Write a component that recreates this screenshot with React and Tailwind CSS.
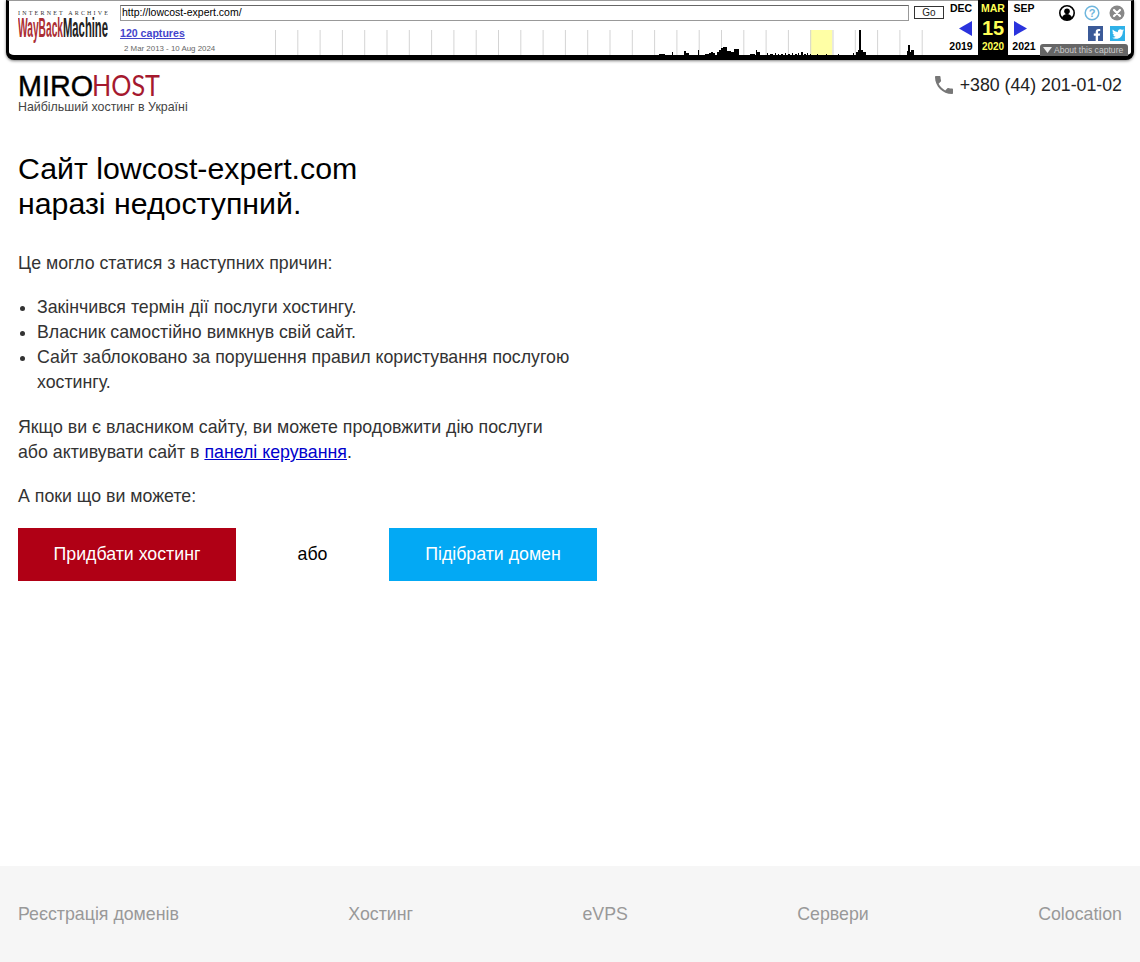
import { FaFacebookF, FaTwitter } from 'react-icons/fa'

const bars = [
  [659, 6, 1], [672, 1, 3], [684, 2, 4], [686, 3, 2], [698, 1, 5], [705, 4, 1], [709, 2, 2], [711, 2, 3], [713, 2, 2],
  [717, 2, 3], [719, 2, 5], [721, 2, 7], [723, 4, 8], [727, 4, 4], [731, 3, 3], [734, 5, 6],
  [750, 5, 1], [756, 1, 5], [757, 3, 3], [767, 1, 2], [770, 3, 1], [775, 1, 2], [778, 1, 1], [781, 2, 1], [785, 1, 2],
  [788, 2, 1], [792, 1, 2], [795, 2, 1], [798, 1, 2], [801, 2, 3], [804, 2, 1], [807, 1, 2], [810, 1, 1], [817, 1, 1],
  [826, 1, 1], [838, 1, 1], [853, 1, 2], [856, 2, 3], [858, 1, 5], [859, 2, 25], [861, 2, 5], [863, 3, 3],
  [907, 1, 4], [908, 2, 10], [910, 1, 3], [911, 3, 5],
]

const ticks = Array.from({ length: 31 }, (_, i) => 275 + i * 22.3)

const Sparkline = () => (
  <svg width="669" height="25" viewBox="275 30 669 25" className="block">
    <rect x="810" y="30" width="22.3" height="25" fill="#ffffa5" />
    {ticks.map((x) => (
      <rect key={x} x={x} y="30" width="1" height="25" fill="#d4d4d4" />
    ))}
    {bars.map(([x, w, h]) => (
      <rect key={x} x={x} y={55 - h} width={w} height={h} fill="#000" />
    ))}
  </svg>
)

const WaybackLogo = () => (
  <svg width="90" height="40" viewBox="0 0 90 40" className="block">
    <text x="0" y="6" fontFamily="Liberation Serif, serif" fontSize="6" fill="#333" textLength="90" lengthAdjust="spacing">
      INTERNET ARCHIVE
    </text>
    <text x="0" y="28" fontFamily="Liberation Sans, sans-serif" fontWeight="700" fontSize="28" fill="#ab2e33" textLength="45" lengthAdjust="spacingAndGlyphs">
      WayBack
    </text>
    <text x="45" y="28" fontFamily="Liberation Sans, sans-serif" fontSize="28" fontWeight="700" fill="#222" textLength="45" lengthAdjust="spacingAndGlyphs">
      Machine
    </text>
  </svg>
)

const MirohostLogo = () => (
  <svg width="143" height="24" viewBox="0 0 143 24" className="block overflow-visible">
    <text x="0" y="21" fontFamily="Liberation Sans, sans-serif" fontSize="29" fill="#000" stroke="#000" strokeWidth="0.4" textLength="75" lengthAdjust="spacingAndGlyphs">
      MIRO
    </text>
    <text x="74" y="21" fontFamily="Lato, sans-serif" fontWeight="400" fontSize="29" fill="#a5192e" textLength="68" lengthAdjust="spacingAndGlyphs">
      HOST
    </text>
  </svg>
)

const Toolbar = () => (
  <div className="mx-[6px] h-[60px] border-x-[3px] border-b-[5px] border-black rounded-b-[8px] border-t border-t-[#999] bg-white shadow-[0_1px_3px_rgba(0,0,0,0.5)] flex relative font-['Liberation_Sans',sans-serif]">
    <div className="w-[111px] pl-[9px] pt-[8px] shrink-0">
      <WaybackLogo />
    </div>
    <div className="w-[824px] shrink-0">
      <div className="flex items-start h-[22px] pt-[4px]">
        <div className="w-[789px] h-[16px] border border-[#999] border-t-[#666] px-[1px] text-[10.5px] leading-[12px] text-black">
          http://lowcost-expert.com/
        </div>
        <div className="ml-[5px] mt-[1px] w-[30px] h-[13px] border border-[#333] text-[10px] leading-[12px] text-center text-[#222]">Go</div>
      </div>
      <div className="flex">
        <div className="w-[155px] shrink-0 pt-[4px]">
          <a className="block text-[10.6px] leading-[13px] font-bold text-[#4444cc] underline">120 captures</a>
          <div className="pl-[4px] pt-[4px] text-[7.9px] leading-[10px] text-[#666]">2 Mar 2013 - 10 Aug 2024</div>
        </div>
        <div className="pt-[7px]">
          <Sparkline />
        </div>
      </div>
    </div>
    <div className="flex w-[96px] shrink-0 -mt-px h-[55px] text-center font-bold text-[10.5px] text-black">
      <div className="w-[34px] flex flex-col items-center">
        <div className="h-[17px] leading-[17px]">DEC</div>
        <svg width="13" height="15" viewBox="0 0 13 15" className="ml-[9px] mt-[4px]"><path d="M13 0v15L0 7.5z" fill="#2a33dd" /></svg>
        <div className="mt-[4px] leading-[13px]">2019</div>
      </div>
      <div className="w-[30px] bg-black text-[#ffff55] flex flex-col items-center">
        <div className="h-[17px] leading-[17px]">MAR</div>
        <div className="text-[20px] leading-[23px]">15</div>
        <div className="leading-[13px] text-[10px]">2020</div>
      </div>
      <div className="w-[32px] flex flex-col items-center">
        <div className="h-[17px] leading-[17px]">SEP</div>
        <svg width="13" height="15" viewBox="0 0 13 15" className="-ml-[7px] mt-[4px]"><path d="M0 0v15l13-7.5z" fill="#2a33dd" /></svg>
        <div className="mt-[4px] leading-[13px]">2021</div>
      </div>
    </div>
    <div className="flex-1 pl-[19px] pt-[4px]">
      <div className="flex gap-[9px] items-center h-[16px]">
        <svg width="16" height="16" viewBox="0 0 16 16">
          <circle cx="8" cy="8" r="7.2" fill="#fff" stroke="#000" strokeWidth="1.6" />
          <circle cx="8" cy="6.3" r="2.8" fill="#000" />
          <path d="M2.8 13c1-3 3-4 5.2-4s4.2 1 5.2 4a7 7 0 0 1-10.400 0z" fill="#000" />
        </svg>
        <svg width="16" height="16" viewBox="0 0 16 16">
          <circle cx="8" cy="8" r="6.800" fill="#fff" stroke="#6fb6dd" strokeWidth="1.5" />
          <text x="8" y="12" textAnchor="middle" fontSize="11" fontWeight="700" fontFamily="Liberation Sans, sans-serif" fill="#6fb6dd">?</text>
        </svg>
        <svg width="16" height="16" viewBox="0 0 16 16">
          <circle cx="8" cy="8" r="7.5" fill="#888" />
          <path d="M5 5l6 6M11 5l-6 6" stroke="#fff" strokeWidth="2.2" strokeLinecap="round" />
        </svg>
      </div>
      <div className="flex justify-end gap-[7px] pt-[5px] w-[66px]">
        <div className="w-[15px] h-[15px] bg-[#3b5a98] flex items-end justify-end text-white"><FaFacebookF size={12} /></div>
        <div className="w-[15px] h-[15px] bg-[#2fb1e8] flex items-center justify-center text-white"><FaTwitter size={12} /></div>
      </div>
    </div>
    <div className="absolute right-[3px] top-[43px] w-[88px] h-[12px] rounded-t-[3px] bg-[#666] text-[#ccc] text-[8.6px] leading-[13px] font-normal flex items-center">
      <svg width="9" height="6" viewBox="0 0 9 6" className="ml-[3px] mr-[2px] shrink-0"><path d="M0 0h9L4.500 6z" fill="#eee" /></svg>
      About this capture
    </div>
  </div>
)

const PhoneIcon = () => (
  <svg width="24" height="24" viewBox="0 0 24 24" fill="#777">
    <path d="M6.620 10.790c1.440 2.830 3.760 5.140 6.590 6.590l2.200-2.200c.27-.27.67-.36 1.020-.24 1.120.37 2.330.57 3.570.57.55 0 1 .45 1 1V20c0 .55-.45 1-1 1-9.390 0-17-7.610-17-17 0-.55.45-1 1-1h3.500c.55 0 1 .45 1 1 0 1.250.2 2.450.57 3.570.11.35.03.74-.25 1.020l-2.200 2.200z" />
  </svg>
)

export default function App() {
  return (
    <div className="min-h-screen flex flex-col bg-white text-[#333] font-['Liberation_Sans',sans-serif]">
      <Toolbar />

      <header className="flex justify-between px-[18px] pt-[15px]">
        <div>
          <MirohostLogo />
          <p className="text-[12.4px] leading-[14px] mt-px text-[#444]">Найбільший хостинг в Україні</p>
        </div>
        <div className="flex items-center h-[20px] text-[17.76px] text-[#222] gap-[4px]">
          <PhoneIcon />
          +380 (44) 201-01-02
        </div>
      </header>

      <main className="flex-1 px-[18px] pt-[37px] text-[17.76px] leading-[25px]">
        <h1 className="text-[30.3px] leading-[35px] font-normal text-black">
          Сайт lowcost-expert.com
          <br />
          наразі недоступний.
        </h1>
        <div className="w-[556px]">
          <p className="mt-[30px]">Це могло статися з наступних причин:</p>
          <ul className="list-disc pl-[19px] mt-[19px]">
            <li>Закінчився термін дії послуги хостингу.</li>
            <li>Власник самостійно вимкнув свій сайт.</li>
            <li>Сайт заблоковано за порушення правил користування послугою хостингу.</li>
          </ul>
          <p className="mt-[20px]">
            Якщо ви є власником сайту, ви можете продовжити дію послуги або активувати сайт в{' '}
            <a className="text-[#0000cc] underline">панелі керування</a>.
          </p>
          <p className="mt-[19px]">А поки що ви можете:</p>
        </div>
        <div className="flex items-center w-[579px] mt-[19px]">
          <a className="w-[218px] h-[53px] flex items-center justify-center bg-[#b00015] text-white">Придбати хостинг</a>
          <span className="w-[153px] text-center text-black">або</span>
          <a className="w-[208px] h-[53px] flex items-center justify-center bg-[#03a9f4] text-white">Підібрати домен</a>
        </div>
      </main>

      <footer className="h-[96px] bg-[#f6f6f6] px-[18px] flex items-center justify-between text-[17.76px] text-[#999]">
        <a>Реєстрація доменів</a>
        <a>Хостинг</a>
        <a>eVPS</a>
        <a>Сервери</a>
        <a>Colocation</a>
      </footer>
    </div>
  )
}
